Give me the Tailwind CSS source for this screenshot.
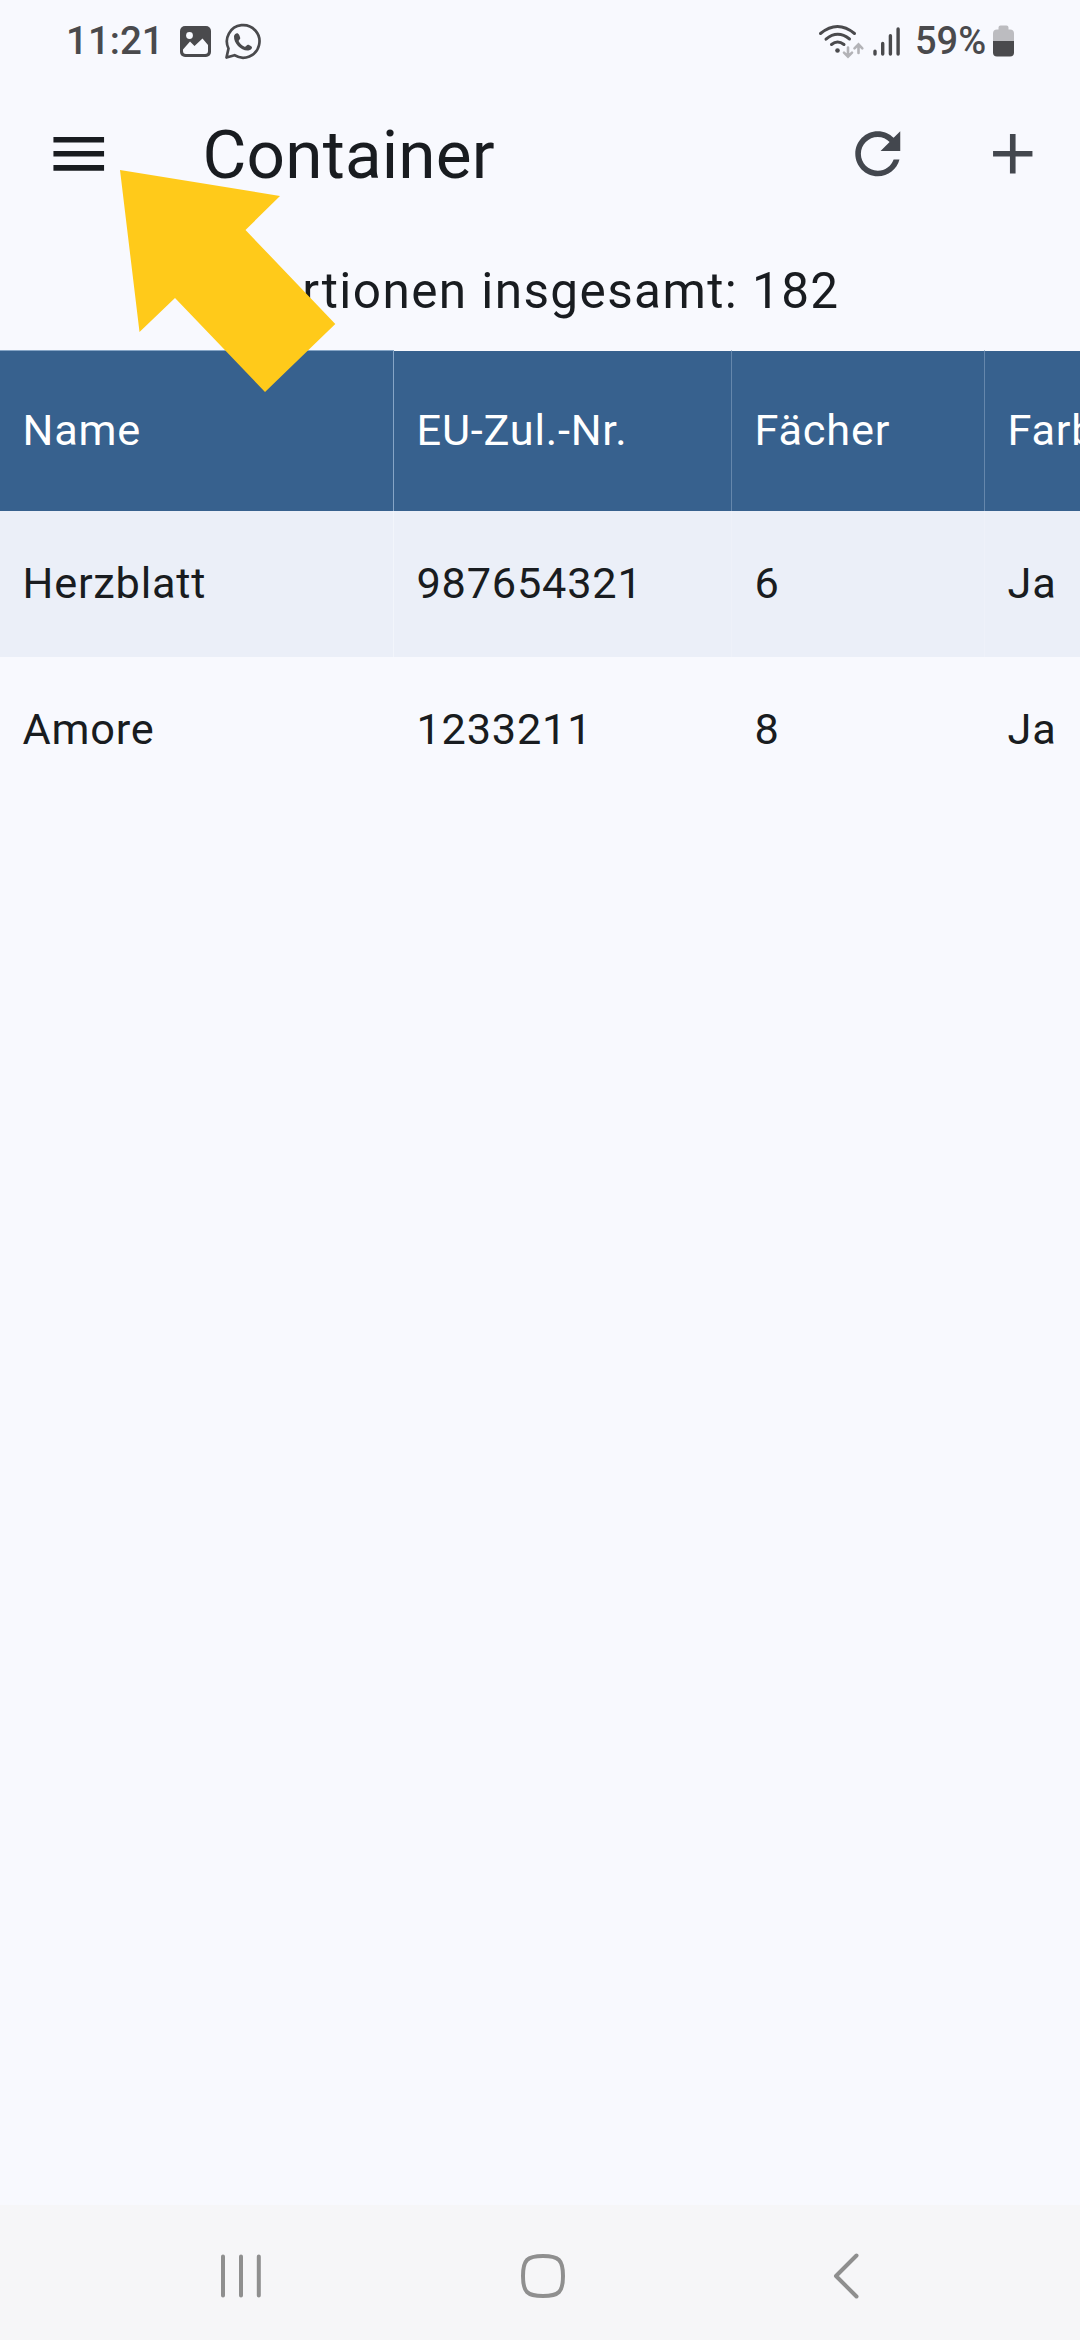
<!DOCTYPE html>
<html lang="de">
<head>
  <meta charset="UTF-8" />
  <meta name="viewport" content="width=device-width, initial-scale=1.0" />
  <title>Container</title>
  <script src="https://cdn.jsdelivr.net/npm/@tailwindcss/browser@4"></script>
</head>
<body class="bg-[#f8f9fe] font-[Roboto,sans-serif] text-[#191c20]">

  <div class="relative flex flex-col w-[1080px] h-[2340px] overflow-hidden">

    <!-- Status bar -->
    <div class="flex justify-between h-[75px] shrink-0 pl-[66px] pr-[64px] text-[#4a4a4d] font-medium">
      <div class="flex">
        <span class="w-[109px] pt-[6px] text-[38.5px] leading-[69px]">11:21</span>
        <svg class="w-[90px] h-[75px]" viewBox="175 0 90 75" fill="none">
          <rect x="180" y="26" width="31" height="31" rx="5" fill="#4a4a4d" />
          <circle cx="189.5" cy="35.5" r="3.4" fill="#f8f9fe" />
          <path d="M183 49.500L190 41.500L194.500 46L202.500 38.500L208 45V51Q208 54 205 54H186Q183 54 183 51Z" fill="#f8f9fe" />
          <path d="M226.500 57.500L228.500 48.500A16.300 16.300 0 1 1 234.500 55.200Z" stroke="#4a4a4d" stroke-width="2.700" stroke-linejoin="round" />
          <path d="M234 36.500C234 34.500 236 33 237.500 33.300C238.700 33.500 240.300 37 240.300 38.300C240.300 39.500 238.300 40.300 238.700 41.300C240 43.800 242 45.600 244.600 46.800C245.800 47.200 246.800 44.700 248 44.700C249.200 44.800 252 46.400 252 47.300C252 49.800 249.500 50.500 247.600 50.500C240.500 50.500 233.700 43 234 36.500Z" fill="#4a4a4d" />
        </svg>
      </div>
      <div class="flex">
        <svg class="w-[100px] h-[75px]" viewBox="815 0 100 75" fill="none" stroke-linecap="round">
          <g stroke="#4a4a4d" stroke-width="3">
            <path d="M820.500 33.500Q837.500 19.500 854.500 33.500" />
            <path d="M826 39.200Q837.500 29.500 849.500 39" />
            <path d="M831.500 44.500Q837.500 39.500 844 44.500" />
          </g>
          <circle cx="837.500" cy="50.500" r="2.300" fill="#4a4a4d" />
          <path d="M848 47.500V56M844 52.700L848 56.700L852 52.700M858.500 53V45M854.500 48.300L858.500 44.300L862.300 48.300" stroke="#b3b3b7" stroke-width="2.600" />
          <path d="M875 51.200V54M882.700 43.500V54M890.400 35.700V54M898.100 29V54" stroke="#4a4a4d" stroke-width="3.400" />
        </svg>
        <span class="w-[78px] pt-[7px] text-[38px] leading-[69px]">59%</span>
        <svg class="w-[23px] h-[75px]" viewBox="993 0 23 75">
          <path d="M998.500 29V27.500Q998.500 25.500 1000.500 25.500H1006.500Q1008.500 25.500 1008.500 27.500V29.500H1010Q1014 29.500 1014 33.500V41.300H993V33.500Q993 29.500 997 29.500H998.500Z" fill="#bcbcc0" />
          <path d="M993 41H1014V52.500Q1014 56.500 1010 56.500H997Q993 56.500 993 52.500Z" fill="#4a4a4d" />
        </svg>
      </div>
    </div>

    <!-- App bar -->
    <header class="flex items-center h-[158px] shrink-0 pl-[45px] pr-[34px]">
      <svg class="size-[67.5px]" viewBox="0 0 24 24" fill="#191c20"><path d="M3 18h18v-2H3v2zm0-5h18v-2H3v2zm0-7v2h18V6H3z" /></svg>
      <h1 class="flex-1 pl-[90px] text-[67.5px] leading-[79px] tracking-[0.15px]">Container</h1>
      <div class="flex gap-[67.5px] text-[#43474e]">
        <svg class="size-[67.5px]" viewBox="0 0 24 24" fill="currentColor"><path d="M17.650 6.350C16.200 4.900 14.210 4 12 4c-4.420 0-7.990 3.580-7.990 8s3.570 8 7.990 8c3.730 0 6.840-2.550 7.730-6h-2.080c-.820 2.330-3.040 4-5.650 4-3.310 0-6-2.690-6-6s2.690-6 6-6c1.660 0 3.140.690 4.220 1.780L13 11h7V4l-2.350 2.350z" /></svg>
        <svg class="size-[67.5px]" viewBox="0 0 24 24" fill="currentColor"><path d="M19 13h-6v6h-2v-6H5v-2h6V5h2v6h6v2z" /></svg>
      </div>
    </header>

    <p class="h-[117px] shrink-0 text-center text-[49.5px] leading-[117px] tracking-[1.4px]">Portionen insgesamt: 182</p>

    <main class="flex-1 text-[43.3px] tracking-[0.78px] whitespace-nowrap">
      <div class="grid grid-cols-[394px_338px_253px_95px] h-[161px] leading-[159px] text-white *:bg-[#37618e] *:pl-[22.5px] *:border-t">
        <div class="border-r border-[#86a5c6]">Name</div>
        <div class="border-r border-t-[#f8f9fe] border-r-[#6587ac]">EU-Zul.-Nr.</div>
        <div class="border-r border-t-[#f8f9fe] border-r-[#6587ac]">Fächer</div>
        <div class="border-t-[#f8f9fe] overflow-hidden">Farbe</div>
      </div>
      <div class="grid grid-cols-[394px_338px_253px_95px] h-[146px] leading-[145px] bg-[#ebeff8] *:pl-[22.5px]">
        <div class="border-r border-[#f2f5fb]">Herzblatt</div>
        <div class="border-r border-[#eef1f9]">987654321</div>
        <div class="border-r border-[#eef1f9]">6</div>
        <div>Ja</div>
      </div>
      <div class="grid grid-cols-[394px_338px_253px_95px] h-[146px] leading-[145px] *:pl-[22.5px]">
        <div>Amore</div>
        <div>1233211</div>
        <div>8</div>
        <div>Ja</div>
      </div>
    </main>

    <!-- Navigation bar -->
    <nav class="h-[135px] shrink-0 bg-[#f6f6f8]">
      <svg class="w-full h-full" viewBox="0 2205 1080 135" fill="none" stroke="#8f8f8f" stroke-width="4" stroke-linecap="round" stroke-linejoin="round">
        <path d="M223 2256.500V2295.500M241 2256.500V2295.500M258.800 2256.500V2295.500" />
        <path d="M543 2256C559 2256 563 2260 563 2276S559 2296 543 2296S523 2292 523 2276S527 2256 543 2256Z" />
        <path d="M856.500 2255.500L836 2276L856.500 2296.500" />
      </svg>
    </nav>

    <!-- Arrow pointing at the menu button -->
    <svg class="absolute left-[119px] top-[169px] w-[218px] h-[224px]" viewBox="119 169 218 224">
      <polygon points="120,170 280,196 245.500,230 335.300,324 265,392 175,298 139.500,332" fill="#ffca1a" />
    </svg>
  </div>

</body>
</html>
